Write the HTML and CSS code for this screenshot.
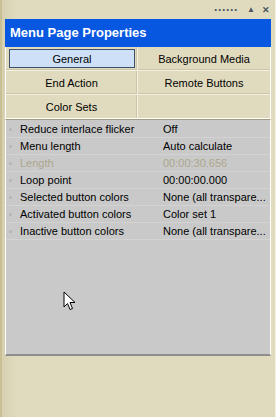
FILE: index.html
```html
<!DOCTYPE html>
<html>
    <head>
        <title>Menu Page Properties</title>
        <link rel="stylesheet" href="styles.css">
    </head>
    <body>
        <div class="pane">
            <div class="topbar">
                <span class="grip">&middot;&middot;&middot;&middot;&middot;&middot;</span>
                <span class="tbtn">&#9650;</span>
                <span class="tbtn close">&#10005;</span>
            </div>
            <div class="title">Menu Page Properties</div>

            <div class="tabs">
                <div class="tab"><span class="on">General</span></div>
                <div class="tab">Background Media</div>
                <div class="tab">End Action</div>
                <div class="tab">Remote Buttons</div>
                <div class="tab">Color Sets</div>
                <div class="tab"></div>
            </div>

            <div class="props">
                <div class="row"><span class="dot"></span><span class="name">Reduce interlace flicker</span><span class="val">Off</span></div>
                <div class="row"><span class="dot"></span><span class="name">Menu length</span><span class="val">Auto calculate</span></div>
                <div class="row off"><span class="dot"></span><span class="name">Length</span><span class="val">00:00:30.656</span></div>
                <div class="row"><span class="dot"></span><span class="name">Loop point</span><span class="val">00:00:00.000</span></div>
                <div class="row"><span class="dot"></span><span class="name">Selected button colors</span><span class="val">None (all transpare...</span></div>
                <div class="row"><span class="dot"></span><span class="name">Activated button colors</span><span class="val">Color set 1</span></div>
                <div class="row"><span class="dot"></span><span class="name">Inactive button colors</span><span class="val">None (all transpare...</span></div>

                <svg class="cursor" width="14" height="20" viewBox="0 0 14 20">
                    <path d="M1 1 L1 16 L4.5 12.5 L7 18.5 L9.5 17.5 L7 11.5 L12 11.5 Z" fill="#fff" stroke="#000" stroke-width="1"/>
                </svg>
            </div>
        </div>
    </body>
</html>
```

FILE: styles.css
```css
body{
    margin: 0;
    background-color: #e0dbbe;
    font-family: "Liberation Sans", Arial, sans-serif;
    font-size: 11px;
    color: #000;
}

.pane{
    height: 417px;
    box-sizing: border-box;
    padding: 0 4px 0 3px;
    border-left: 2px solid #c9bf95;
    border-right: 1px solid #f2efe2;
    background: linear-gradient(to right, #d6d0b0 0, #e0dbbe 14px);
}

.topbar{
    height: 19px;
    display: flex;
    align-items: center;
    justify-content: flex-end;
    gap: 7px;
    padding-right: 1px;
    color: #4a5560;
}

.grip{
    font-size: 12px;
    font-weight: bold;
    letter-spacing: 0;
    margin-right: 2px;
}

.tbtn{
    font-size: 8px;
}

.close{
    font-size: 9px;
    font-weight: bold;
}

.title{
    background-color: #0857e0;
    color: #fff;
    font-weight: bold;
    font-size: 13px;
    height: 28px;
    line-height: 28px;
    padding-left: 5px;
}

.tabs{
    display: grid;
    grid-template-columns: 132px 1fr;
    border: 1px solid #fff;
    border-top: 0;
    background-color: #e0dbbe;
}

.tab{
    height: 23px;
    display: flex;
    align-items: center;
    justify-content: center;
    border-bottom: 1px solid #f3f0e4;
    box-shadow: inset 0 -1px 0 #cdc6a6;
}

.tab:nth-child(odd){
    border-right: 1px solid #f3f0e4;
    box-shadow: inset -1px -1px 0 #cdc6a6;
}

.tab:nth-child(5), .tab:nth-child(6){
    border-bottom: 0;
    box-shadow: none;
}

.tab:nth-child(5){
    box-shadow: inset -1px 0 0 #cdc6a6;
}

.on{
    display: flex;
    align-items: center;
    justify-content: center;
    width: 124px;
    height: 17px;
    background-color: #cde0f7;
    border: 1px solid #3e4f6a;
    margin-left: 1px;
}

.props{
    position: relative;
    height: 233px;
    background-color: #c9c9c9;
    border-top: 1px solid #a09a80;
    border-left: 1px solid #fff;
    border-right: 1px solid #fff;
    border-bottom: 2px solid #8e8e8e;
    padding-top: 1px;
}

.row{
    display: flex;
    align-items: center;
    height: 16px;
    border-bottom: 1px solid #d3d3d3;
}

.dot{
    width: 3px;
    height: 3px;
    margin: 0 8px 0 3px;
    background-color: #b5b5b5;
    border-radius: 50%;
}

.name{
    width: 143px;
}

.off{
    color: #ada68c;
}

.cursor{
    position: absolute;
    left: 57px;
    top: 171px;
}
```
